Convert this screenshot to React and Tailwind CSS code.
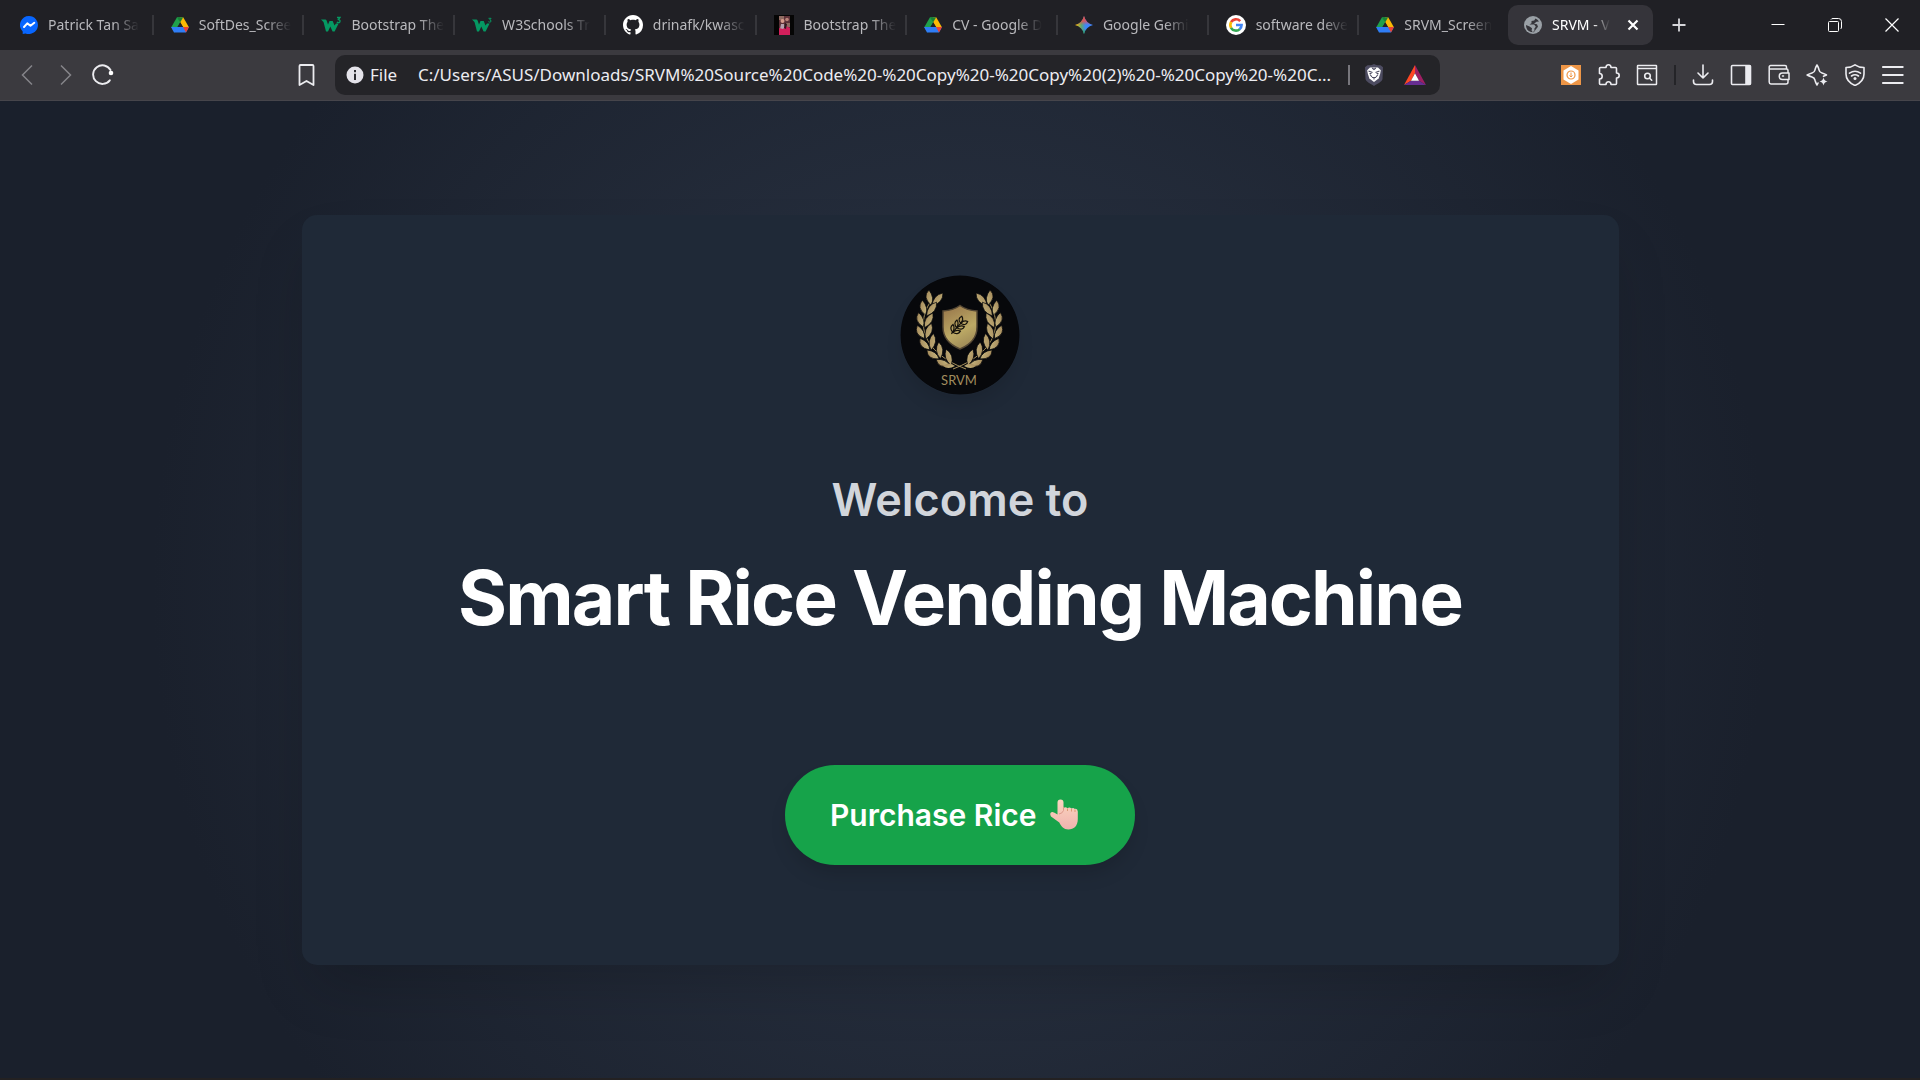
import React from "react";

function Drive() {
  return (
    <svg viewBox="0 0 18 18" className="size-[18px] shrink-0">
      <path d="M6 1.2h3L9.2 6.5 3.6 16.4.4 11z" fill="#1fa04b" />
      <path d="M9 1.2h3.2L17.8 11l-5.4.4L8 4z" fill="#fbb904" />
      <path d="M6 1.2h6.2L9.1 6.6z" fill="#188038" />
      <path d="M0 11h18l-3 5.4H3z" fill="#2f7df6" />
      <path d="M12 11h6l-3 5.4z" fill="#ea4335" />
      <path d="M9.1 6.4 6.4 11h5.4z" fill="#202025" />
    </svg>
  );
}

function Messenger() {
  return (
    <svg viewBox="0 0 18 18" className="size-[18px] shrink-0">
      <path d="M9 0a9 9 0 1 1-3.3 17.4L2.7 18v-2.6A9 9 0 0 1 9 0z" fill="#0866ff" />
      <path d="m4 11 3.3-3.6 3.2 2.4 3.8-3" fill="none" stroke="#fff" strokeWidth="2" strokeLinejoin="round" strokeLinecap="round" />
    </svg>
  );
}

function W3({ small }) {
  return (
    <svg viewBox="0 0 20 18" className="h-[18px] w-5 shrink-0">
      <path d="M0 3.500h4.500q1 0 1.300 1.500L7 8.500 8.500 5h3.200L13.500 9.500 15 7.500h2.600l-4 8h-2L9.300 10.500 7 15.500H5L2.500 6z" fill="#059862" />
      <path d={small ? "M16.5 2.3h2.6l-1.4 1.600q2 .3 1.200 1.800-.9 1-2.500 0" : "M16 1.500h3L17.400 3.600q2.300.4 1.400 2.400-1 1.300-3 .1"} fill="none" stroke="#059862" strokeWidth={small ? "1" : "1.3"} />
    </svg>
  );
}

function Github() {
  return (
    <svg viewBox="0 0 16 16" className="size-5 shrink-0" fill="#fff">
      <path d="M8 0C3.58 0 0 3.58 0 8c0 3.54 2.29 6.53 5.47 7.59.4.07.55-.17.55-.38 0-.19-.01-.82-.01-1.49-2.01.37-2.53-.49-2.69-.94-.09-.23-.48-.94-.82-1.13-.28-.15-.68-.52-.01-.53.63-.01 1.08.58 1.23.82.72 1.21 1.87.87 2.33.66.07-.52.28-.87.51-1.07-1.78-.2-3.64-.89-3.64-3.95 0-.87.31-1.59.82-2.15-.08-.2-.36-1.02.08-2.12 0 0 .67-.21 2.2.82.64-.18 1.32-.27 2-.27s1.36.09 2 .27c1.53-1.04 2.2-.82 2.2-.82.44 1.1.16 1.92.08 2.12.51.56.82 1.27.82 2.15 0 3.07-1.87 3.75-3.65 3.95.29.25.54.73.54 1.48 0 1.07-.01 1.93-.01 2.2 0 .21.15.46.55.38A8.01 8.01 0 0 0 16 8c0-4.42-3.58-8-8-8z" />
    </svg>
  );
}

function Photo() {
  return (
    <svg viewBox="0 0 20 20" className="size-5 shrink-0">
      <path d="M0 0h20v20H0z" fill="#050505" />
      <path d="M5 1h11v19H5z" fill="#5c3138" />
      <path d="M5 1h5v4H5zM12 8h4v4h-4z" fill="#8f6b62" />
      <circle cx="8.5" cy="6" r="2" fill="#d79b8c" />
      <circle cx="13" cy="4.5" r="1.8" fill="#b98378" />
      <path d="M7 9h3l1 5H6z" fill="#b8a0ae" />
      <path d="M5 13l4 1 3-3 4 2v7H5z" fill="#d31f5c" />
      <path d="M11 8l2 1-1 5-2-1z" fill="#30191f" />
    </svg>
  );
}

function Gemini() {
  return (
    <svg viewBox="0 0 18 18" className="size-[18px] shrink-0">
      <defs>
        <linearGradient id="gem" x1="0" y1="0.5" x2="1" y2="0.5">
          <stop offset="0.05" stopColor="#f9b90c" />
          <stop offset="0.35" stopColor="#5fa66f" />
          <stop offset="0.6" stopColor="#3b87fb" />
          <stop offset="1" stopColor="#3a86ff" />
        </linearGradient>
        <linearGradient id="gemTop" x1="0" y1="0" x2="0" y2="1">
          <stop offset="0" stopColor="#f94543" />
          <stop offset="0.3" stopColor="#f94543" stopOpacity="0.7" />
          <stop offset="0.5" stopColor="#f94543" stopOpacity="0" />
          <stop offset="0.7" stopColor="#21a55a" stopOpacity="0" />
          <stop offset="1" stopColor="#21b35a" />
        </linearGradient>
      </defs>
      <path d="M9 0q1.800 7.200 9 9-7.200 1.800-9 9Q7.200 10.800 0 9 7.200 7.200 9 0z" fill="url(#gem)" />
      <path d="M9 0q1.800 7.200 9 9-7.200 1.800-9 9Q7.200 10.800 0 9 7.200 7.200 9 0z" fill="url(#gemTop)" />
    </svg>
  );
}

function Google() {
  return (
    <svg viewBox="0 0 20 20" className="size-5 shrink-0" fill="none" strokeWidth="2.600">
      <circle cx="10" cy="10" r="10" fill="#fff" />
      <path d="M14.200 6.200A5.700 5.700 0 0 0 5 7.200" stroke="#ea4335" />
      <path d="M5.200 7a5.700 5.700 0 0 0 0 6" stroke="#fbbc05" />
      <path d="M5 12.800a5.700 5.700 0 0 0 8.800 1.300" stroke="#34a853" />
      <path d="M13.600 14.200a5.700 5.700 0 0 0 2-4.200H10" stroke="#4285f4" />
    </svg>
  );
}

function Globe() {
  return (
    <svg viewBox="0 0 18 18" className="size-[18px] shrink-0">
      <circle cx="9" cy="9" r="9" fill="#9aa0a6" />
      <path d="M11.500 2.500 10.200 4.600 7.500 5v2.200L5.400 8.600h4.800l1.600 2.200-1.400 1.600v2.800L8.600 16a7 7 0 0 1-1-1.500l.4-2.300-2.400-1.600L2 9a7 7 0 0 0 5 7l3 .2 1.600-2.400 2.400-3-1-2.500-3-.5 2.500-2 2.500-.3A7 7 0 0 0 11.500 2.500z" fill="#35343a" />
    </svg>
  );
}

const tabs = [
  { icon: <Messenger />, title: "Patrick Tan Sa" },
  { icon: <Drive />, title: "SoftDes_Scree" },
  { icon: <W3 />, title: "Bootstrap The" },
  { icon: <W3 small />, title: "W3Schools Tr" },
  { icon: <Github />, title: "drinafk/kwasc" },
  { icon: <Photo />, title: "Bootstrap The" },
  { icon: <Drive />, title: "CV - Google D" },
  { icon: <Gemini />, title: "Google Gemi" },
  { icon: <Google />, title: "software deve" },
  { icon: <Drive />, title: "SRVM_Screen" },
];

function TabStrip() {
  return (
    <div className="flex h-[50px] items-center bg-[#202025] text-[#b9b9bd]">
      <div className="flex w-[1508px] min-w-0 items-center pl-[3px]">
        {tabs.map((tab, i) => (
          <button
            key={i}
            className={
              "flex h-5 min-w-0 flex-1 items-center gap-[10px] pl-[17px] pr-2 " +
              (i < tabs.length - 1 ? "border-r-2 border-[#36363b]" : "")
            }
          >
            {tab.icon}
            <span className="whitespace-nowrap text-left text-[14px] leading-5 [mask-image:linear-gradient(to_right,#000_72%,transparent)]">
              {tab.title}
            </span>
          </button>
        ))}
      </div>
      <div className="flex h-10 w-[145px] shrink-0 items-center rounded-[10px] bg-[#35343a] pl-4 pr-[10px] text-white">
        <button className="flex min-w-0 flex-1 items-center gap-[10px]">
          <Globe />
          <span className="whitespace-nowrap text-left text-[14px] leading-5 [mask-image:linear-gradient(to_right,#000_70%,transparent)]">
            SRVM - V
          </span>
        </button>
        <button aria-label="Close tab" className="ml-3 grid size-5 place-items-center">
          <svg viewBox="0 0 20 20" className="size-5" stroke="#fff" strokeWidth="2.200">
            <path d="m5.500 5.500 9 9m0-9-9 9" />
          </svg>
        </button>
      </div>
      <button aria-label="New tab" className="ml-[18px] grid size-4 shrink-0 place-items-center">
        <svg viewBox="0 0 16 16" className="size-4" stroke="#d6d6da" strokeWidth="1.800">
          <path d="M1.500 8h13M8 1.500v13" />
        </svg>
      </button>
      <div className="ml-auto flex h-full shrink-0">
        <button aria-label="Minimize" className="grid w-[57px] place-items-center">
          <svg viewBox="0 0 14 14" className="size-[14px]" stroke="#fff" fill="none">
            <path d="M.5 6.500h13" />
          </svg>
        </button>
        <button aria-label="Restore" className="grid w-[57px] place-items-center">
          <svg viewBox="0 0 14 14" className="size-[14px]" stroke="#fff" fill="none">
            <rect x=".5" y="3.500" width="10" height="10" rx="1" />
            <path d="M3 1.500Q3.500.5 5 .5h5.500a3 3 0 0 1 3 3V9q0 1.500-1 2" />
          </svg>
        </button>
        <button aria-label="Close" className="grid w-[57px] place-items-center">
          <svg viewBox="0 0 14 14" className="size-[14px]" stroke="#fff" fill="none" strokeWidth="1.200">
            <path d="m.5.5 13 13m0-13-13 13" />
          </svg>
        </button>
      </div>
    </div>
  );
}

function ToolButton({ label, children }) {
  return (
    <button aria-label={label} className="size-[22px] shrink-0">
      <svg viewBox="0 0 22 22" className="size-[22px]" fill="none" stroke="#ececf0" strokeWidth="1.600" strokeLinecap="round" strokeLinejoin="round">
        {children}
      </svg>
    </button>
  );
}

function Toolbar() {
  return (
    <div className="flex h-[51px] items-center border-b border-[#46454b] bg-[#3b3a3f] px-4">
      <div className="flex w-[280px] shrink-0 items-center gap-4">
        <button aria-label="Back" className="size-[22px]">
          <svg viewBox="0 0 22 22" className="size-[22px]" fill="none" stroke="#85848a" strokeWidth="1.500">
            <path d="M16 1.500 6.500 11l9.500 9.500" />
          </svg>
        </button>
        <button aria-label="Forward" className="size-[22px]">
          <svg viewBox="0 0 22 22" className="size-[22px]" fill="none" stroke="#85848a" strokeWidth="1.500">
            <path d="M7 1.500 16.500 11 7 20.500" />
          </svg>
        </button>
        <ToolButton label="Reload">
          <path d="M17.800 16.300A9.300 9.300 0 1 1 18.500 6" strokeWidth="1.900" />
          <circle cx="19" cy="9" r="2.300" fill="#fff" stroke="none" />
        </ToolButton>
      </div>
      <ToolButton label="Bookmark">
        <path d="M4.500 1h12a1 1 0 0 1 1 1V21L10.500 17l-7 4V2a1 1 0 0 1 1-1z" strokeWidth="1.800" />
      </ToolButton>
      <div className="ml-[17px] flex h-10 w-[1105px] min-w-0 items-center rounded-[10px] bg-[#242428] pl-[11px] pr-[14px] text-[17px] leading-6 text-[#ececf1]">
        <svg viewBox="0 0 18 18" className="size-[18px] shrink-0">
          <circle cx="9" cy="9" r="8.500" fill="#e4e3ea" />
          <path d="M9 4v2.200M9 7.800V14" stroke="#2a2a2f" strokeWidth="2" />
        </svg>
        <span className="ml-[6px] w-12 shrink-0">File</span>
        <input
          aria-label="Address"
          readOnly
          className="min-w-0 flex-1 bg-transparent outline-none"
          value="C:/Users/ASUS/Downloads/SRVM%20Source%20Code%20-%20Copy%20-%20Copy%20(2)%20-%20Copy%20-%20C..."
        />
        <div className="ml-2 h-5 w-0.5 shrink-0 bg-[#77767c]" />
        <button aria-label="Brave Shields" className="ml-[14px] shrink-0">
          <svg viewBox="0 0 20 22" className="h-[22px] w-5">
            <path d="M10 0c2 1.500 5 1.200 6.500 1.300l2.500 2L18.500 15c-.5 3-5 4.500-8.500 7-3.500-2.500-8-4-8.500-7L1 3.300l2.500-2C5 1.200 8 1.500 10 0z" fill="#4d4c61" />
            <path d="M6 3.500h8l2.800 2.700-.7 3.800-1.500 4.500L10 18l-4.600-3.500L3.900 10l-.7-3.800z" fill="#fff" />
            <path d="m4.500 7 4 1.500M15.500 7l-4 1.500M6 10.500l2 2.500M14 10.500 12 13M8 13.500h4M10 13v2.500M8.200 4l1.800 1.500L11.800 4M5.500 9.500h2M12.500 9.500h2" stroke="#4d4c61" strokeWidth="1.100" fill="none" />
          </svg>
        </button>
        <button aria-label="Brave Rewards" className="ml-5 shrink-0">
          <svg viewBox="0 0 22 20" className="h-5 w-[22px]">
            <path d="M11 0 0 20 7 15.800 11 8z" fill="#ff4724" />
            <path d="M11 0 22 20l-7-4.200L11 8z" fill="#9e1f63" />
            <path d="M0 20h22l-7-4.200H7z" fill="#662d91" />
            <path d="M11 8.200 15 15.800H7z" fill="#fff" />
          </svg>
        </button>
      </div>
      <div className="ml-auto flex shrink-0 items-center gap-4">
        <button aria-label="Extension" className="size-[22px]">
          <svg viewBox="0 0 22 22" className="size-[22px]">
            <path d="M1 1h20v20H1z" fill="#ee9647" />
            <path d="m11 2 7.500 4.500v9L11 20l-7.500-4.500v-9z" fill="#fff" />
            <circle cx="11" cy="11" r="4" fill="none" stroke="#ee9647" strokeWidth="1.200" />
            <path d="M11 8.500v4.500m-1.500-1.500L11 13l1.500-1.500" stroke="#ee9647" fill="none" />
          </svg>
        </button>
        <ToolButton label="Extensions">
          <path d="M2.500 3.500H8C8 1.500 9 .8 10.500.8S13 1.500 13 3.500h4.500q1 0 1 1V9c1.800 0 2.700 1 2.700 2.500S20.300 14 18.500 14v5.500q0 1-1 1H13c0-2-1-2.700-2.500-2.700S8 18.500 8 20.500H2.500q-1 0-1-1V15C3.500 15 4.200 14 4.200 12.200S3.500 9.500 1.500 9.500v-5q0-1 1-1z" />
        </ToolButton>
        <ToolButton label="Search tabs">
          <path d="M2 1.500h18q.5 0 .5.500v18q0 .5-.5.500H2q-.5 0-.5-.5V2q0-.5.500-.5zM1.500 4.500h19" strokeWidth="1.500" />
          <circle cx="11.500" cy="12" r="2.800" />
          <path d="m13.700 14.200 2 2" />
        </ToolButton>
        <div className="h-5 w-0.5 bg-[#242428]" />
        <ToolButton label="Downloads">
          <path d="M11 1v13m-5-5 5 5 5-5M1.500 16v1.500q0 3 3 3h13q3 0 3-3V16" />
        </ToolButton>
        <ToolButton label="Sidebar">
          <rect x="1.500" y="1.500" width="19" height="19" rx="1" />
          <path d="M16 2h4v18h-4z" fill="#ececf0" />
        </ToolButton>
        <ToolButton label="Wallet">
          <path d="M18.500 5V3A1.500 1.500 0 0 0 17 1.500H3A1.500 1.500 0 0 0 1.200 3v15A2 2 0 0 0 3 20h15a2 2 0 0 0 2-2v-2M1.500 5H18.500A1.500 1.500 0 0 1 20 6.500V9M21 9h-6.500a3 3 0 0 0 0 6.500H21zM14.500 12h1" strokeWidth="1.500" />
        </ToolButton>
        <ToolButton label="Leo AI">
          <path d="M17.500 12.300 20.500 11q-2-1.300-4.500-2t-3-3.200Q12.300 3 11 1 9.700 3 9 5.800 8.500 8.300 6 9 3.500 9.700 1.200 11q2.300 1.300 4.800 2t3 3.200q.7 2.800 2 4.800l1-2" />
          <path d="M17.500 13.500q.7 3.300 4 4-3.300.7-4 4-.7-3.300-4-4 3.300-.7 4-4z" fill="#ececf0" stroke="none" />
        </ToolButton>
        <ToolButton label="VPN">
          <path d="M11 .8q4 2.700 9 2.700v6.500q0 7.500-9 11.500-9-4-9-11.500V3.500q5 0 9-2.700z" />
          <path d="M5.500 9.200q5.500-4 11 0M7.500 12q3.500-2.500 7 0" />
          <circle cx="11" cy="14.500" r="1.500" fill="#ececf0" stroke="none" />
        </ToolButton>
        <ToolButton label="Menu">
          <path d="M.8 3h20M.8 11h20M.8 19h20" strokeWidth="1.800" />
        </ToolButton>
      </div>
    </div>
  );
}

const leaves = [
  [31, 23, 0],
  [25, 33, -4],
  [22, 45, -10],
  [22, 57, -20],
  [26, 69, -32],
  [34, 79, -46],
  [44, 87, -58],
];

function Branch() {
  return (
    <g fill="url(#gold)">
      <path d="M31 26C17 46 19 76 66 94" fill="none" stroke="#a8935f" strokeWidth="1" />
      {leaves.map(([x, y, r]) => (
        <g key={y} transform={`translate(${x} ${y}) rotate(${r})`} stroke="#07080b" strokeWidth="0.700">
          <path d="M0 7Q-9-1-2-8 4 0 0 7z" />
          <path d="M1 8Q2-3 12-5 12 5 1 8z" />
        </g>
      ))}
      <path d="M43 91q6-5 12 0-7 4-12 0z" />
    </g>
  );
}

function Logo() {
  return (
    <svg viewBox="0 0 120 120" role="img" aria-label="SRVM logo" className="size-[120px] rounded-full shadow-[0_12px_19px_-4px_rgba(0,0,0,0.12)]">
      <defs>
        <linearGradient id="gold" x1="0" y1="0" x2="1" y2="1">
          <stop offset="0" stopColor="#a08355" />
          <stop offset="1" stopColor="#c9ba82" />
        </linearGradient>
        <linearGradient id="shield" x1="0.100" y1="0" x2="0.500" y2="1">
          <stop offset="0" stopColor="#97754a" />
          <stop offset="0.650" stopColor="#bca965" />
          <stop offset="1" stopColor="#a08c58" />
        </linearGradient>
      </defs>
      <circle cx="60" cy="60" r="59.500" fill="#07080b" />
      <Branch />
      <g transform="matrix(-1 0 0 1 119 0)">
        <Branch />
      </g>
      <path d="M60 30.500q7 5 17 5.500V52q0 15-17 22-17-7-17-22V36q10-.5 17-5.500z" fill="url(#shield)" stroke="#544734" strokeWidth="1.500" />
      <g transform="translate(52 58) rotate(42)" fill="none" stroke="#15120c" strokeWidth="1.200">
        <path d="M0 1v-18" />
        <path d="M0-1q-6-1-5-6 4 1 5 6zM0-1q6-1 5-6-4 1-5 6zM0-7q-6-1-5-6 4 1 5 6zM0-7q6-1 5-6-4 1-5 6zM0-13q-6-1-4-6 4 1 4 6zM0-13q6-1 4-6-4 1-4 6z" />
      </g>
      <text x="59" y="110" textAnchor="middle" fill="#a18c5e" className="font-['Lato',sans-serif] text-[13px]">
        SRVM
      </text>
    </svg>
  );
}

function Hand() {
  return (
    <svg viewBox="0 0 28 31" aria-hidden="true" className="h-[31px] w-7">
      <defs>
        <linearGradient id="skin" x1="0" y1="0" x2="0" y2="1">
          <stop offset="0" stopColor="#fbd5bf" />
          <stop offset="1" stopColor="#efb3ae" />
        </linearGradient>
      </defs>
      <path d="M7.500 3.500a3 3 0 0 1 6 0V9q2-1.500 4 .2 2-1.500 4 .3 2-1 3.300.5 2.700-.7 3 2.500v7.500c0 7-4 10.500-9.500 10.500-4.500 0-7-3-9-7L1 17.500Q-1 14 2 13q1.800-.3 5.500 2.500z" fill="url(#skin)" />
      <path d="M13.500 8v3.500q-1 3-4.500 3.500" fill="none" stroke="#dd9a8b" strokeWidth="1" />
      <path d="M17.500 9.500V12M21.500 10v2.500M25 10.500V13" fill="none" stroke="#d99a70" strokeWidth="1" />
    </svg>
  );
}

export default function App() {
  return (
    <div className="flex min-h-screen flex-col bg-[#1a202c] font-['Noto_Sans','Open_Sans',sans-serif]">
      <header>
        <TabStrip />
        <Toolbar />
      </header>
      <main className="flex flex-1 items-center justify-center border-b-2 border-[#232122] bg-[radial-gradient(circle_at_center,#2d3748_0%,#1a202c_75%)] py-16 font-['Inter',sans-serif]">
        <section className="flex w-[1317px] max-w-[90%] flex-col items-center rounded-[15px] bg-[#1f2937] px-16 pt-[60px] pb-[100px] text-center shadow-[0_30px_60px_-12px_rgba(0,0,0,0.2)]">
          <Logo />
          <p className="mt-20 text-[45px] leading-[50px] font-semibold text-[#d1d5db]">Welcome to</p>
          <h1 className="mt-[35px] text-[75px] leading-[75px] font-bold tracking-tight text-white">
            Smart Rice Vending Machine
          </h1>
          <button className="mt-[130px] flex h-[100px] w-[350px] items-center rounded-full bg-[#16a34a] pl-[45px] text-[30px] leading-10 font-semibold text-white shadow-[0_12px_19px_-4px_rgba(0,0,0,0.15)]">
            Purchase Rice
            <span className="ml-[14px]">
              <Hand />
            </span>
          </button>
        </section>
      </main>
    </div>
  );
}
